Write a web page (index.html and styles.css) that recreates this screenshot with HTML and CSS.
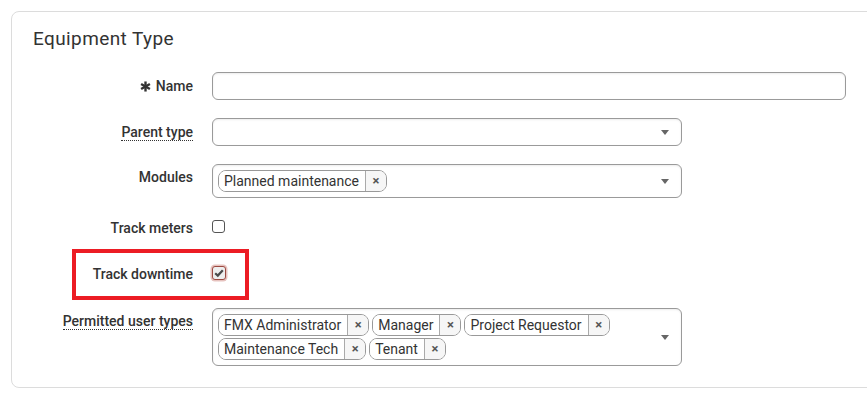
FILE: index.html
```html
<!DOCTYPE html>
<html lang="en">
<head>
    <meta charset="UTF-8">
    <title>Equipment Type</title>
    <link rel="stylesheet" href="styles.css">
</head>
<body>
    <div class="card">
        <h2 class="card-title">Equipment Type</h2>

        <div class="form">
            <div class="row">
                <label class="label">
                    <svg class="req" viewBox="0 0 12 12" width="11" height="11">
                        <g stroke="#333" stroke-width="2.6" stroke-linecap="butt">
                            <line x1="6" y1="0.5" x2="6" y2="11.5"/>
                            <line x1="1.2" y1="3.2" x2="10.8" y2="8.8"/>
                            <line x1="1.2" y1="8.8" x2="10.8" y2="3.2"/>
                        </g>
                    </svg>Name</label>
                <input class="text-input wide" type="text">
            </div>

            <div class="row">
                <label class="label"><span class="hint">Parent type</span></label>
                <div class="select">
                    <span class="arrow"></span>
                </div>
            </div>

            <div class="row top-row">
                <label class="label">Modules</label>
                <div class="select multi">
                    <span class="tag"><span class="tag-text">Planned maintenance</span><span class="tag-x">&times;</span></span>
                    <span class="arrow"></span>
                </div>
            </div>

            <div class="row check-row">
                <label class="label">Track meters</label>
                <span class="checkbox"></span>
            </div>

            <div class="row check-row">
                <div class="highlight"></div>
                <label class="label">Track downtime</label>
                <span class="checkbox checked">
                    <svg viewBox="0 0 12 12" width="12" height="12">
                        <path d="M2.2 6.2 L4.8 8.6 L9.8 3.2" fill="none" stroke="#4a4a4a" stroke-width="2.2"/>
                    </svg>
                </span>
            </div>

            <div class="row top-row">
                <label class="label"><span class="hint">Permitted user types</span></label>
                <div class="select multi">
                    <span class="tag"><span class="tag-text">FMX Administrator</span><span class="tag-x">&times;</span></span>
                    <span class="tag"><span class="tag-text">Manager</span><span class="tag-x">&times;</span></span>
                    <span class="tag"><span class="tag-text">Project Requestor</span><span class="tag-x">&times;</span></span>
                    <span class="tag"><span class="tag-text">Maintenance Tech</span><span class="tag-x">&times;</span></span>
                    <span class="tag"><span class="tag-text">Tenant</span><span class="tag-x">&times;</span></span>
                    <span class="arrow"></span>
                </div>
            </div>
        </div>
    </div>
</body>
</html>
```
FILE: styles.css
```css
body {
    margin: 0;
    padding: 11px 0 0 11px;
    font-family: Roboto, "Liberation Sans", Arial, sans-serif;
    color: #333;
    background: #fff;
    overflow: hidden;
}
.card {
    width: 900px;
    height: 377px;
    box-sizing: border-box;
    border: 1px solid #dcdcdc;
    border-radius: 8px;
    padding: 15px 0 0 21px;
}
.card-title {
    margin: 0 0 21px 0;
    font-size: 19px;
    line-height: 24px;
    letter-spacing: 0.4px;
    font-weight: 400;
    color: #333;
}
.form {
    display: flex;
    flex-direction: column;
    gap: 18px;
}
.row {
    display: flex;
    align-items: center;
    position: relative;
}
.label {
    width: 160px;
    margin-right: 19px;
    text-align: right;
    font-size: 14px;
    line-height: 20px;
    font-weight: 500;
    color: #333;
    flex-shrink: 0;
    position: relative;
    z-index: 1;
}
.req {
    vertical-align: -1px;
    margin-right: 5px;
}
.hint {
    border-bottom: 1px dotted #333;
}
.text-input {
    height: 28px;
    box-sizing: border-box;
    border: 1px solid #9a9a9a;
    border-radius: 6px;
    box-shadow: inset 0 1px 2px rgba(0, 0, 0, 0.08);
    padding: 0 8px;
    font: inherit;
}
.wide {
    width: 634px;
}
.select {
    width: 470px;
    height: 28px;
    box-sizing: border-box;
    border: 1px solid #9a9a9a;
    border-radius: 6px;
    box-shadow: inset 0 1px 2px rgba(0, 0, 0, 0.08);
    position: relative;
}
.select.multi {
    height: auto;
    min-height: 34px;
    padding: 4px 30px 4px 5px;
    display: flex;
    flex-wrap: wrap;
}
.arrow {
    position: absolute;
    right: 12px;
    top: 50%;
    margin-top: -2px;
    border-left: 4.5px solid transparent;
    border-right: 4.5px solid transparent;
    border-top: 5px solid #666;
}
.tag {
    display: flex;
    height: 22px;
    margin: 1px 3px 1px 0;
    box-sizing: border-box;
    border: 1px solid #999;
    border-radius: 8px;
    overflow: hidden;
    font-size: 14px;
    line-height: 20px;
    font-weight: 400;
    color: #333;
}
.tag-text {
    padding: 0 6px 0 5px;
    background: #fff;
}
.tag-x {
    width: 20px;
    text-align: center;
    background: #f6f6f6;
    border-left: 1px solid #aaa;
    font-size: 13px;
    font-weight: 700;
    color: #555;
}
.check-row {
    height: 28px;
    align-items: flex-start;
    padding-top: 2px;
    box-sizing: border-box;
}
.checkbox {
    width: 13px;
    height: 13px;
    box-sizing: border-box;
    border: 1px solid #555;
    border-radius: 3px;
    margin-top: 2px;
    background: #fff;
}
.checkbox.checked {
    width: 14px;
    height: 14px;
    margin-top: 2px;
    border: 1px solid #9c4a42;
    background: #eee;
    box-shadow: 0 0 0 1.5px rgba(200, 120, 110, 0.45);
    display: flex;
    align-items: center;
    justify-content: center;
}
.highlight {
    position: absolute;
    left: 39px;
    top: -13px;
    width: 177px;
    height: 51px;
    box-sizing: border-box;
    border: 4px solid #ec1c24;
}
.top-row {
    align-items: flex-start;
}
.top-row .label {
    padding-top: 3px;
}
```
